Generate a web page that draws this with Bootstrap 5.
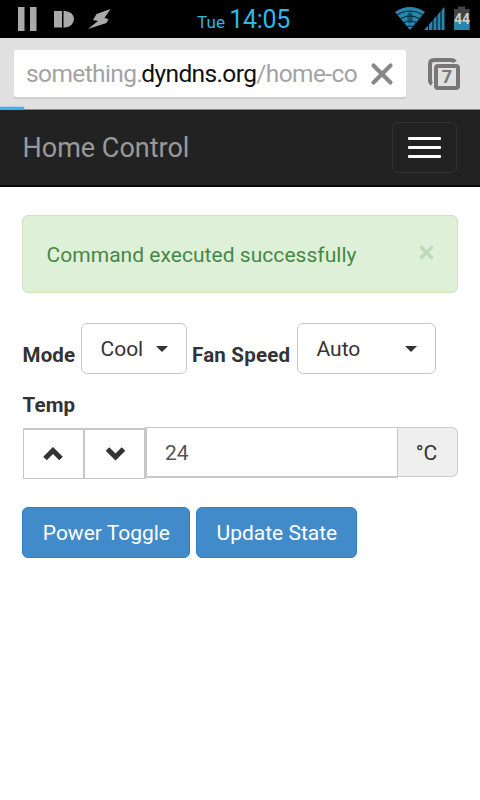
<!DOCTYPE html>
<html lang="en">
<head>
<meta charset="utf-8">
<meta name="viewport" content="width=device-width, initial-scale=1">
<title>Home Control</title>
<link href="https://cdn.jsdelivr.net/npm/bootstrap@5.3.0/dist/css/bootstrap.min.css" rel="stylesheet">
<style>
body{font-family:Roboto,"Liberation Sans",sans-serif;font-size:21px;line-height:30px;color:#333;background:#fff;overflow:hidden}
.statusbar{height:38px;background:#000;color:#33b5e5}
.clock{margin-left:85px;width:198px;line-height:40px;white-space:pre}
.clock-day{font-size:17px;letter-spacing:.1px}
.clock-time{font-size:25px;letter-spacing:-.3px}
.browserbar{height:72px;background:#e0e0e0;border-bottom:1px solid #888;padding:12px 18px 0 14px}
.urlbox{width:392px;height:47px;background:#fff;border-radius:2px;box-shadow:0 2px 1px #ccc;padding:0 12px}
.urltext{width:334px;flex:none;font-size:24.5px;line-height:49px;color:#a3a3a3;white-space:nowrap;letter-spacing:-.6px}
.urltext b{font-weight:400;color:#111;letter-spacing:-.62px;margin-left:-1px}
.progressline{position:absolute;left:0;top:107px;width:24px;height:4px;background:#33b5e5;border-radius:0 1px 1px 0;box-shadow:0 0 2px #33b5e5}
.topnav{height:77px;background:#222;border-bottom:2px solid #080808;padding:0 23px 0 22.500px}
.topnav .navbar-brand{font-size:27px;line-height:30px;color:#999;padding:0;margin:0;letter-spacing:0}
.topnav .navbar-toggler{width:65.500px;height:51px;border:1.5px solid #333;border-radius:6px;padding:0;gap:6px}
.bar{width:33px;height:3px;background:#fff;border-radius:1px}
.page{padding:28px 22px 0}
.notice{height:78px;background:#dff0d8;border:1px solid #d0e5bb;border-radius:6px;color:#468847;padding:1px 22px 0 23.5px;margin:0 0 30px;letter-spacing:.04px}
.field-label{font-weight:700;font-size:20.5px;white-space:nowrap;padding-left:.6px;letter-spacing:.12px}
.select-btn{height:51px;border:1px solid #c8c8c8;border-radius:6px;color:#333;font-size:21px;padding:1px 18px 0 18.500px}
.select-btn .choice{padding-top:2px}
.caret{width:12px;height:6px;background:#333;clip-path:polygon(0 0,100% 0,50% 100%)}
.step-btn{width:62px;height:51px;border:1px solid #c8c8c8;border-right-width:2px;border-top-width:2px;border-radius:0;padding:0;margin-top:1px}
.temp-input{height:51px;border:1px solid #c8c8c8;border-bottom-width:2px;border-left-width:2px;font-size:21px;color:#555;padding:2px 18px 0}
.unit{width:61px;height:50px;border:1px solid #ccc;background:#eee;border-radius:0 6px 6px 0!important;font-size:21px;color:#333;padding:3px 2px 0 0}
.action{height:51px;background:#428bca;border:1px solid #357ebd;border-radius:6px;color:#fff;font-size:21px;padding:3px 0 0}
.mode-label{width:59px}
.mode-select{width:106px}
.fan-label{width:105px;margin-left:5px;padding-left:0;letter-spacing:.22px}
.fan-select{width:139px}
.temp-label{margin-top:16px;margin-bottom:7px}
.temp-row{padding-left:1px}
.actions{margin-top:28px;gap:6px;padding-left:.4px}
.power{width:168px}
.update{width:161px}
</style>
</head>
<body>
<div class="statusbar d-flex">
<svg width="112" height="38" fill="#aaa"><path d="M18 7h6.500v24H18zM30 7h6.500v24H30zM54 11h8v16.500h-8zM63.500 11h2q8 1 8.500 8-.5 7-8.500 8.500h-2z"/><path d="M110.500 9 96.500 14l-3.500 6 5 1-10 8 18.500-6 2-4-4-1z"/></svg>
<div class="clock"><span class="clock-day">Tue </span><span class="clock-time">14:05</span></div>
<svg width="85" height="38"><path d="M0 12Q15 2 30 12L15 30z" fill="#2687ae"/><path d="M2 15q13-8 26 0M5 19q10-6 20 0M8 23q7-4 14 0M12 27q3-2 6 0" fill="none" stroke="#062b3c" stroke-width="1.200"/><path d="m15 11 3 4-1 8h-4l-1-8z" fill="#062b3c" opacity=".55"/><path d="M29 30 49.500 7v23z" fill="#2687ae"/><path d="M33.500 24v6M38 20v10M42 15v15M46 11v19" stroke="#000"/><path d="M59 9h4V6.500h7V9h4.500v21H59z" fill="#444"/><path d="M59 22h15.500v8H59z" fill="#2687ae"/><text x="67" y="24" text-anchor="middle" font-family="Roboto,sans-serif" font-weight="700" font-size="14" fill="#ccc">44</text></svg>
</div>
<div class="browserbar d-flex">
<div class="urlbox d-flex align-items-center"><div class="urltext">something.<b>dyndns.org</b>/home-co</div>
<svg width="28" height="24" class="flex-shrink-0 ms-2"><path d="m5.500 3.500 17 17M22.500 3.500l-17 17" stroke="#888" stroke-width="4.200" stroke-linecap="round"/></svg></div>
<svg width="34" height="34" class="ms-auto mt-2"><g fill="none" stroke="#777"><path d="M4 26Q2 25 2 22V6q0-4 4-4h17q3 0 4 2" stroke-width="4"/><rect x="8" y="8" width="22" height="22" rx="2" stroke-width="4"/></g><text x="19" y="25" text-anchor="middle" font-family="Roboto,sans-serif" font-weight="700" font-size="18" fill="#777">7</text></svg>
</div>
<div class="progressline"></div>
<nav class="navbar topnav flex-nowrap">
<a class="navbar-brand" href="#">Home Control</a>
<button class="navbar-toggler d-flex flex-column align-items-center justify-content-center" type="button" aria-label="Menu"><span class="bar"></span><span class="bar"></span><span class="bar"></span></button>
</nav>
<main class="page">
<div class="alert notice d-flex align-items-center justify-content-between" role="alert"><span>Command executed successfully</span>
<svg width="16" height="15" class="mb-1"><path d="m1.500 1.500 12 12M13.500 1.500l-12 12" stroke="#bedbb8" stroke-width="3.500"/></svg></div>
<div class="d-flex align-items-center">
<span class="field-label mt-2 pt-1 mode-label">Mode</span>
<button class="btn select-btn mode-select d-flex align-items-center justify-content-between" type="button"><span class="choice">Cool</span><span class="caret"></span></button>
<span class="field-label mt-2 pt-1 fan-label">Fan Speed</span>
<button class="btn select-btn fan-select d-flex align-items-center justify-content-between" type="button"><span class="choice">Auto</span><span class="caret"></span></button>
</div>
<div class="field-label temp-label">Temp</div>
<div class="input-group flex-nowrap align-items-start temp-row">
<button class="btn step-btn" type="button" aria-label="Up"><svg width="22" height="14" class="d-block mx-auto"><path d="m2 11.500 8-8 8 8" fill="none" stroke="#333" stroke-width="5"/></svg></button>
<button class="btn step-btn" type="button" aria-label="Down"><svg width="18" height="14" class="d-block mx-auto overflow-visible"><path d="m1.500 2 8 8 8-8" fill="none" stroke="#333" stroke-width="5"/></svg></button>
<input class="form-control temp-input" value="24" aria-label="Temp">
<span class="input-group-text unit justify-content-center">°C</span>
</div>
<div class="d-flex actions"><button class="btn action power" type="button">Power Toggle</button><button class="btn action update" type="button">Update State</button></div>
</main>
<script src="https://cdn.jsdelivr.net/npm/bootstrap@5.3.0/dist/js/bootstrap.bundle.min.js"></script>
</body>
</html>
